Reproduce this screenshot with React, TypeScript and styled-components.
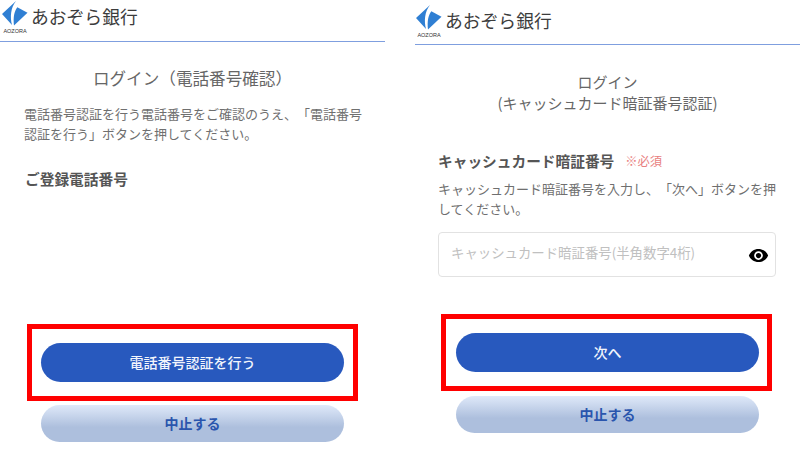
import React from "react";
import styled, { createGlobalStyle } from "styled-components";
import { MdVisibility } from "react-icons/md";

const GlobalStyle = createGlobalStyle`
  html, body {
    margin: 0;
    padding: 0;
    background: #fff;
  }
  body {
    font-family: "Noto Sans CJK JP", "Noto Sans", sans-serif;
    text-spacing-trim: space-all;
  }
`;

const Page = styled.div`
  width: 800px;
  height: 466px;
  display: flex;
  justify-content: space-between;
  overflow: hidden;
`;

const Pane = styled.section`
  width: 385px;
  display: flex;
  flex-direction: column;
`;

const Header = styled.header<{ $height: number; $top: number; $indent: number }>`
  box-sizing: border-box;
  height: ${(p) => p.$height}px;
  padding: ${(p) => p.$top}px 0 0 ${(p) => p.$indent}px;
  border-bottom: 1.5px solid #7f9fdf;
  display: flex;
  align-items: flex-start;
  gap: 3px;
`;

const LogoBox = styled.div`
  width: 26px;
  display: flex;
  flex-direction: column;
  align-items: center;
  padding-top: 1px;
`;

const LogoCaption = styled.span`
  font-family: "Liberation Sans", sans-serif;
  font-size: 5.5px;
  line-height: 6px;
  margin-top: 1px;
  color: #333;
  white-space: nowrap;
`;

const BankName = styled.span`
  font-size: 17.8px;
  line-height: 20px;
  margin-top: 6px;
  color: #3c3c3c;
`;

const Title = styled.h1<{ $top: number; $size: number }>`
  margin: ${(p) => p.$top}px 0 0;
  font-size: ${(p) => p.$size}px;
  line-height: 21px;
  font-weight: 400;
  color: #666;
  text-align: center;
`;

const Body = styled.div<{ $left: number }>`
  padding-left: ${(p) => p.$left}px;
  width: 345px;
`;

const Text = styled.p<{ $top: number }>`
  margin: ${(p) => p.$top}px 0 0;
  font-size: 13px;
  line-height: 20px;
  color: #6f6f6f;
`;

const FieldLabel = styled.div<{ $top: number; $left?: number }>`
  margin: ${(p) => p.$top}px 0 0 ${(p) => p.$left ?? 0}px;
  display: flex;
  align-items: center;
  gap: 11px;
  font-size: 14.7px;
  line-height: 20px;
  font-weight: 700;
  color: #555;
`;

const Required = styled.span`
  font-size: 12.3px;
  font-weight: 400;
  color: #e88080;
`;

const Field = styled.div`
  margin-top: 13px;
  width: 338px;
  height: 45px;
  box-sizing: border-box;
  border: 1px solid #e2e2e2;
  border-radius: 4px;
  padding: 0 6px 0 12px;
  display: flex;
  align-items: center;
  justify-content: space-between;
  font-size: 13.4px;
  color: #c0c0c0;
`;

const Placeholder = styled.span`
  margin-bottom: 4px;
`;

const EyeIcon = styled(MdVisibility)`
  font-size: 21px;
  color: #000;
  margin-top: 2px;
`;

const Actions = styled.div<{ $top: number; $left: number }>`
  margin: ${(p) => p.$top}px 0 0 ${(p) => p.$left}px;
  display: flex;
  flex-direction: column;
  width: 331px;
`;

const Highlight = styled.div<{ $inset: number }>`
  box-sizing: border-box;
  height: 77px;
  border: 5px solid #f00;
  padding-left: ${(p) => p.$inset - 5}px;
  display: flex;
  align-items: center;
`;

const PrimaryButton = styled.button`
  width: 303px;
  height: 39px;
  flex: none;
  border: 0;
  border-radius: 20px;
  background: #2859be;
  color: #f2f5fc;
  font-family: inherit;
  font-size: 14px;
  font-weight: 500;
  padding: 0;
`;

const CancelButton = styled.button<{ $inset: number; $gap: number }>`
  width: 303px;
  height: 37px;
  margin: ${(p) => p.$gap}px 0 0 ${(p) => p.$inset}px;
  border: 0;
  border-radius: 19px;
  background: linear-gradient(#dfe9f9 0%, #adbfdd 60%, #adbfdd 100%);
  color: #2a55ad;
  font-family: inherit;
  font-size: 14px;
  font-weight: 700;
  padding: 0;
`;

const Logo = () => (
  <svg width="26" height="26" viewBox="0 0 26 26" aria-hidden="true">
    <path d="M14 0 L0 13 L10 24 C8 16 8.5 7 14 0 Z" fill="#2f7fd3" />
    <path d="M25.5 11.7 L15.3 6.3 C12 11 11 17 12 24.5 Z" fill="#2f7fd3" />
  </svg>
);

const Brand = ({ height, top, indent }: { height: number; top: number; indent: number }) => (
  <Header $height={height} $top={top} $indent={indent}>
    <LogoBox>
      <Logo />
      <LogoCaption>AOZORA</LogoCaption>
    </LogoBox>
    <BankName>あおぞら銀行</BankName>
  </Header>
);

export default function App() {
  return (
    <>
      <GlobalStyle />
      <Page>
        <Pane>
          <Brand height={41.5} top={0} indent={2} />
          <Title $top={26} $size={16.6}>
            ログイン（電話番号確認）
          </Title>
          <Body $left={24}>
            <Text $top={15}>
              電話番号認証を行う電話番号をご確認のうえ、「電話番号
              <br />
              認証を行う」ボタンを押してください。
            </Text>
            <FieldLabel $top={25} $left={1}>
              ご登録電話番号
            </FieldLabel>
          </Body>
          <Actions $top={135} $left={27}>
            <Highlight $inset={14}>
              <PrimaryButton>電話番号認証を行う</PrimaryButton>
            </Highlight>
            <CancelButton $inset={14} $gap={4}>
              中止する
            </CancelButton>
          </Actions>
        </Pane>
        <Pane>
          <Brand height={44.5} top={4} indent={1} />
          <Title $top={26} $size={15}>
            ログイン
            <br />
            (キャッシュカード暗証番号認証)
          </Title>
          <Body $left={23}>
            <FieldLabel $top={38}>
              キャッシュカード暗証番号
              <Required>※必須</Required>
            </FieldLabel>
            <Text $top={8}>
              キャッシュカード暗証番号を入力し、「次へ」ボタンを押
              <br />
              してください。
            </Text>
            <Field>
              <Placeholder>キャッシュカード暗証番号(半角数字4桁)</Placeholder>
              <EyeIcon />
            </Field>
          </Body>
          <Actions $top={37} $left={26}>
            <Highlight $inset={15}>
              <PrimaryButton>次へ</PrimaryButton>
            </Highlight>
            <CancelButton $inset={15} $gap={5}>
              中止する
            </CancelButton>
          </Actions>
        </Pane>
      </Page>
    </>
  );
}
